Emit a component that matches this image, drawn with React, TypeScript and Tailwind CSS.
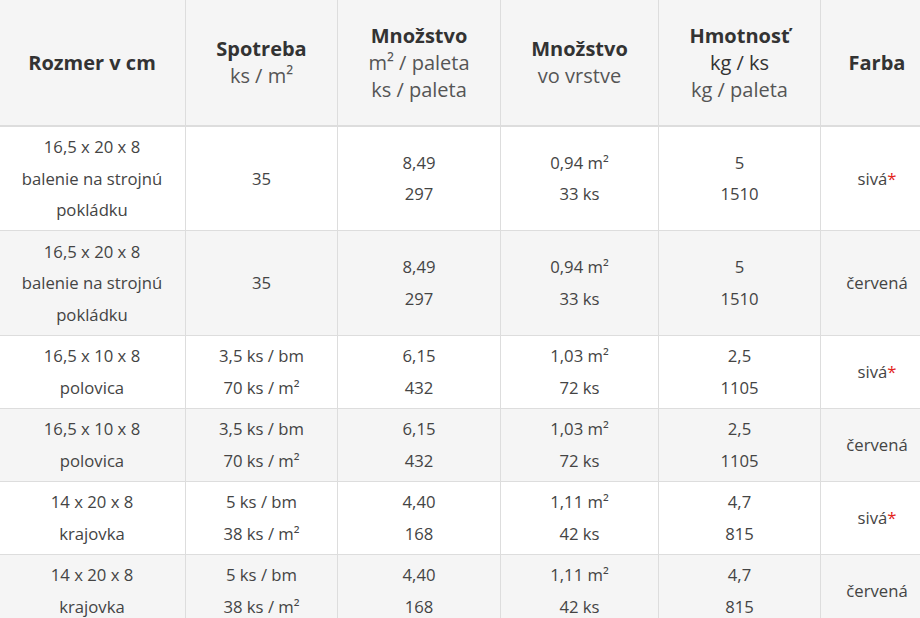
import React from 'react';

// one product row: lines per column
interface Row {
  size: string[];
  usage: string[];
  pallet: string[];
  layer: string[];
  weight: string[];
  color: string;
  star?: boolean;
}

const ROWS: Row[] = [
  {
    size: ['16,5 x 20 x 8', 'balenie na strojnú', 'pokládku'],
    usage: ['35'],
    pallet: ['8,49', '297'],
    layer: ['0,94 m²', '33 ks'],
    weight: ['5', '1510'],
    color: 'sivá',
    star: true,
  },
  {
    size: ['16,5 x 20 x 8', 'balenie na strojnú', 'pokládku'],
    usage: ['35'],
    pallet: ['8,49', '297'],
    layer: ['0,94 m²', '33 ks'],
    weight: ['5', '1510'],
    color: 'červená',
  },
  {
    size: ['16,5 x 10 x 8', 'polovica'],
    usage: ['3,5 ks / bm', '70 ks / m²'],
    pallet: ['6,15', '432'],
    layer: ['1,03 m²', '72 ks'],
    weight: ['2,5', '1105'],
    color: 'sivá',
    star: true,
  },
  {
    size: ['16,5 x 10 x 8', 'polovica'],
    usage: ['3,5 ks / bm', '70 ks / m²'],
    pallet: ['6,15', '432'],
    layer: ['1,03 m²', '72 ks'],
    weight: ['2,5', '1105'],
    color: 'červená',
  },
  {
    size: ['14 x 20 x 8', 'krajovka'],
    usage: ['5 ks / bm', '38 ks / m²'],
    pallet: ['4,40', '168'],
    layer: ['1,11 m²', '42 ks'],
    weight: ['4,7', '815'],
    color: 'sivá',
    star: true,
  },
  {
    size: ['14 x 20 x 8', 'krajovka'],
    usage: ['5 ks / bm', '38 ks / m²'],
    pallet: ['4,40', '168'],
    layer: ['1,11 m²', '42 ks'],
    weight: ['4,7', '815'],
    color: 'červená',
  },
];

const Lines: React.FC<{ lines: string[] }> = ({ lines }) => (
  <>
    {lines.map((l, i) => (
      <div key={i}>{l}</div>
    ))}
  </>
);

const th = 'border border-[#dddddd] border-b-2 h-[126px] px-2 align-middle text-center font-normal';
const td = 'border border-[#dddddd] px-2 py-[4.5px] align-middle text-center';

export default function App() {
  return (
    <div
      className="w-[920px] h-[618px] overflow-hidden bg-white text-[#444444]"
      style={{ fontFamily: '"Open Sans", "Noto Sans", sans-serif' }}
    >
      <table className="table-fixed border-collapse w-[935px] -ml-[2px] -mt-[1px]">
        <colgroup>
          <col className="w-[187px]" />
          <col className="w-[152px]" />
          <col className="w-[163px]" />
          <col className="w-[158px]" />
          <col className="w-[162px]" />
          <col className="w-[113px]" />
        </colgroup>
        <thead>
          <tr className="bg-[#f5f5f5] text-[20px] leading-[27px]">
            <th className={th}>
              <div className="font-bold text-[#333333]">Rozmer v cm</div>
            </th>
            <th className={th}>
              <div className="font-bold text-[#333333]">Spotreba</div>
              <div className="text-[#555555]">ks / m²</div>
            </th>
            <th className={th}>
              <div className="font-bold text-[#333333]">Množstvo</div>
              <div className="text-[#555555]">m² / paleta</div>
              <div className="text-[#555555]">ks / paleta</div>
            </th>
            <th className={th}>
              <div className="font-bold text-[#333333]">Množstvo</div>
              <div className="text-[#555555]">vo vrstve</div>
            </th>
            <th className={th}>
              <div className="font-bold text-[#333333]">Hmotnosť</div>
              <div className="text-[#333333]">kg / ks</div>
              <div className="text-[#555555]">kg / paleta</div>
            </th>
            <th className={th}>
              <div className="font-bold text-[#333333]">Farba</div>
            </th>
          </tr>
        </thead>
        <tbody className="text-[16.7px] leading-[31.5px]">
          {ROWS.map((r, i) => (
            <tr key={i} className={i % 2 === 1 ? 'bg-[#f5f5f5]' : 'bg-white'}>
              <td className={td}>
                <Lines lines={r.size} />
              </td>
              <td className={td}>
                <Lines lines={r.usage} />
              </td>
              <td className={td}>
                <Lines lines={r.pallet} />
              </td>
              <td className={td}>
                <Lines lines={r.layer} />
              </td>
              <td className={td}>
                <Lines lines={r.weight} />
              </td>
              <td className={td}>
                {r.color}
                {r.star && <span className="text-[#e2231a]">*</span>}
              </td>
            </tr>
          ))}
        </tbody>
      </table>
    </div>
  );
}
